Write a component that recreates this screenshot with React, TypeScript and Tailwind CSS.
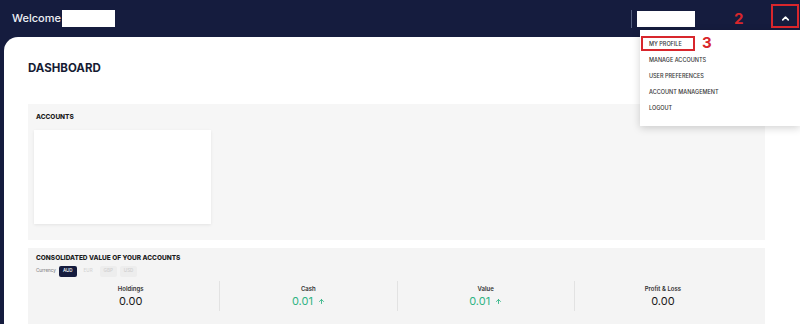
import { ChevronUp, ArrowUp } from 'lucide-react';

const menuItems = ['MY PROFILE', 'MANAGE ACCOUNTS', 'USER PREFERENCES', 'ACCOUNT MANAGEMENT', 'LOGOUT'];

const stats = [
    { label: 'Holdings', value: '0.00', up: false },
    { label: 'Cash', value: '0.01', up: true },
    { label: 'Value', value: '0.01', up: true },
    { label: 'Profit & Loss', value: '0.00', up: false },
];

export default function App() {
    return (
        <div className="relative h-[324px] w-[800px] overflow-hidden bg-[#151c3e] font-['Inter','Liberation_Sans',sans-serif]">
            <header className="flex h-[37px] items-center pl-[12px] pr-[1px]">
                <span className="text-[11px] font-medium text-[#eef0f5]">Welcome</span>
                <div className="ml-[1px] h-[17px] w-[53px] bg-white" />
                <div className="ml-auto h-[18px] w-px bg-[#55607f]" />
                <div className="ml-[5px] h-[16px] w-[58px] bg-white" />
                <div className="w-[76px]" />
                <div className="flex h-[24px] w-[28px] items-center justify-center">
                    <ChevronUp size={11} strokeWidth={3.5} className="text-white" />
                </div>
            </header>

            <main className="ml-[4px] h-[287px] rounded-tl-[14px] bg-white pl-[24px] pr-[35px]">
                <h1 className="pt-[23px] text-[11.5px] font-bold leading-[16px] text-[#161b33]">
                    DASHBOARD
                </h1>

                <section className="mt-[28px] h-[136px] bg-[#f6f6f6] px-[6px] pt-[9px]">
                    <h2 className="pl-[2px] text-[6.5px] font-extrabold leading-[9px] text-[#1c1c1c]">ACCOUNTS</h2>
                    <div className="mt-[8px] h-[94px] w-[177px] bg-white shadow-[0_1px_3px_rgba(0,0,0,0.08)]" />
                </section>

                <section className="mt-[8px] h-[90px] bg-[#f4f4f4] px-[8px] pt-[6px]">
                    <h2 className="text-[6.5px] font-extrabold leading-[9px] text-[#1c1c1c]">
                        CONSOLIDATED VALUE OF YOUR ACCOUNTS
                    </h2>
                    <div className="mt-[3px] flex items-center gap-[3px] text-[4.5px] font-medium">
                        <span className="text-[#8a8a8a]">Currency</span>
                        <span className="rounded-[2px] bg-[#151c3e] px-[4px] py-[2px] text-white">AUD</span>
                        <span className="px-[4px] py-[2px] text-[#d4d4d4]">EUR</span>
                        <span className="rounded-[2px] bg-[#ededed] px-[4px] py-[2px] text-[#cfcfcf]">GBP</span>
                        <span className="rounded-[2px] bg-[#ededed] px-[4px] py-[2px] text-[#cfcfcf]">USD</span>
                    </div>
                    <div className="mt-[4px] grid grid-cols-4 px-[6px]">
                        {stats.map((s, i) => (
                            <div
                                key={s.label}
                                className={
                                    'flex h-[30px] flex-col items-center justify-center ' +
                                    (i > 0 ? 'border-l border-[#e2e2e2]' : '')
                                }
                            >
                                <span className="text-[6px] font-semibold leading-[9px] text-[#333]">{s.label}</span>
                                <span
                                    className={
                                        'mt-[2px] flex items-center gap-[5px] text-[11px] leading-[13px] ' +
                                        (s.up ? 'text-[#2fb383]' : 'text-[#1a1a1a]')
                                    }
                                >
                                    {s.value}
                                    {s.up && <ArrowUp size={7} strokeWidth={3} />}
                                </span>
                            </div>
                        ))}
                    </div>
                </section>
            </main>

            <div className="absolute left-[640px] top-[30px] w-[160px] bg-white pb-[10px] pt-[6px] shadow-[0_2px_8px_rgba(0,0,0,0.18)]">
                {menuItems.map((item) => (
                    <div key={item} className="flex h-[16px] items-center pl-[9px] text-[5.5px] font-medium text-[#333]">
                        {item}
                    </div>
                ))}
            </div>

            <div className="absolute left-[641px] top-[36px] h-[15px] w-[54px] border-2 border-[#d8262c]" />
            <span className="absolute left-[702px] top-[34px] text-[15px] font-bold leading-[18px] text-[#d8262c]">3</span>

            <div className="absolute left-[771px] top-[4px] h-[24px] w-[28px] border-2 border-[#d8262c]" />
            <span className="absolute left-[734px] top-[10px] text-[15px] font-bold leading-[18px] text-[#d8262c]">2</span>
        </div>
    );
}
